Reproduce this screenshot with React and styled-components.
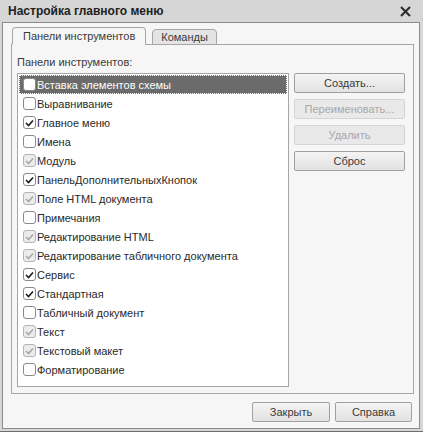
import React from 'react';
import styled, { createGlobalStyle } from 'styled-components';

const GlobalStyle = createGlobalStyle`
  body {
    margin: 0;
    background: #ffffff;
    font-family: "Liberation Sans", Arial, sans-serif;
  }
`;

const Window = styled.div`
  width: 423px;
  height: 432px;
  box-sizing: border-box;
  background: #d6d6d6;
  display: flex;
  flex-direction: column;
  border-bottom: 1px solid #6e6e6e;
`;

const TitleBar = styled.div`
  height: 22px;
  flex-shrink: 0;
  display: flex;
  align-items: center;
  justify-content: space-between;
  padding: 0 12px 0 8px;
  font-size: 12px;
  font-weight: 700;
  color: #222;
`;

const CloseIcon = styled.svg`
  width: 11px;
  height: 11px;
  margin-top: 1px;
`;

const Body = styled.div`
  flex: 1;
  margin: 0 3px 2px 2px;
  border: 1px solid #8c8c8c;
  background: #f6f6f6;
  display: flex;
  flex-direction: column;
  padding: 4px 5px 0 8px;
`;

const TabRow = styled.div`
  display: flex;
  align-items: flex-end;
  gap: 6px;
  height: 18px;
  padding-left: 1px;
  position: relative;
  z-index: 1;
  margin-bottom: -1px;
`;

const Tab = styled.div`
  height: ${(p) => (p.$active ? '18px' : '16px')};
  box-sizing: border-box;
  padding: 0 ${(p) => (p.$active ? '10px' : '8px')};
  border: 1px solid #a6a6a6;
  border-bottom: ${(p) => (p.$active ? '1px solid #f6f6f6' : '1px solid #a6a6a6')};
  border-radius: 4px 4px 0 0;
  background: ${(p) => (p.$active ? '#f6f6f6' : '#e4e4e4')};
  font-size: 11px;
  color: #3a3a3a;
  display: flex;
  align-items: center;
`;

const TabPanel = styled.div`
  height: 350px;
  box-sizing: border-box;
  border: 1px solid #a6a6a6;
  padding: 11px 7px 6px 5px;
  display: flex;
  flex-direction: column;
`;

const Caption = styled.div`
  font-size: 11px;
  color: #3a3a3a;
  height: 17px;
  line-height: 12px;
`;

const Content = styled.div`
  display: flex;
  gap: 5px;
  flex: 1;
`;

const List = styled.div`
  width: 272px;
  box-sizing: border-box;
  border: 1px solid #a6a6a6;
  background: #ffffff;
  padding: 1px 1px 0;
`;

const Row = styled.div`
  height: 19px;
  display: flex;
  align-items: center;
  box-sizing: border-box;
  padding-left: 4px;
  font-size: 11px;
  color: ${(p) => (p.$selected ? '#ffffff' : '#2a2a2a')};
  background: ${(p) => (p.$selected ? '#6b6b6b' : 'transparent')};
  outline: ${(p) => (p.$selected ? '1px dotted #ffffff' : 'none')};
  outline-offset: -1px;
  white-space: nowrap;
`;

const Box = styled.span`
  width: 13px;
  height: 13px;
  box-sizing: border-box;
  border: 1px solid ${(p) => (p.$state === 'grey' ? '#b4b4b4' : '#8a8a8a')};
  border-radius: 3px;
  background: ${(p) => (p.$state === 'grey' ? '#ececec' : '#ffffff')};
  display: flex;
  align-items: center;
  justify-content: center;
  margin-right: 1px;
  flex-shrink: 0;
`;

const Buttons = styled.div`
  display: flex;
  flex-direction: column;
  gap: 6px;
  width: 111px;
`;

const Button = styled.div`
  height: 20px;
  box-sizing: border-box;
  border: 1px solid ${(p) => (p.$disabled ? '#d4d4d4' : '#a0a0a0')};
  border-radius: 2px;
  background: ${(p) =>
    p.$disabled ? '#e9e9e9' : 'linear-gradient(#f4f4f4, #e2e2e2)'};
  color: ${(p) => (p.$disabled ? '#a8a8a8' : '#3a3a3a')};
  font-size: 11px;
  display: flex;
  align-items: center;
  justify-content: center;
  width: ${(p) => p.$width || 'auto'};
`;

const Footer = styled.div`
  display: flex;
  justify-content: flex-end;
  gap: 5px;
  padding: 8px 2px 0 0;
`;

const items = [
  { name: 'Вставка элементов схемы', state: 'off', selected: true },
  { name: 'Выравнивание', state: 'off' },
  { name: 'Главное меню', state: 'on' },
  { name: 'Имена', state: 'off' },
  { name: 'Модуль', state: 'grey' },
  { name: 'ПанельДополнительныхКнопок', state: 'on' },
  { name: 'Поле HTML документа', state: 'grey' },
  { name: 'Примечания', state: 'off' },
  { name: 'Редактирование HTML', state: 'grey' },
  { name: 'Редактирование табличного документа', state: 'grey' },
  { name: 'Сервис', state: 'on' },
  { name: 'Стандартная', state: 'on' },
  { name: 'Табличный документ', state: 'off' },
  { name: 'Текст', state: 'grey' },
  { name: 'Текстовый макет', state: 'grey' },
  { name: 'Форматирование', state: 'off' },
];

const Check = ({ state }) =>
  state === 'off' ? null : (
    <svg width="9" height="8" viewBox="0 0 9 8">
      <path
        d="M1 4 L3.5 6.5 L8 1.5"
        fill="none"
        stroke={state === 'grey' ? '#a8a8a8' : '#1a1a1a'}
        strokeWidth="1.6"
      />
    </svg>
  );

const App = () => {
  return (
    <>
      <GlobalStyle />
      <Window>
        <TitleBar>
          <span>Настройка главного меню</span>
          <CloseIcon viewBox="0 0 11 11">
            <path d="M1 1 L10 10 M10 1 L1 10" stroke="#2a2a2a" strokeWidth="2" />
          </CloseIcon>
        </TitleBar>
        <Body>
          <TabRow>
            <Tab $active>Панели инструментов</Tab>
            <Tab>Команды</Tab>
          </TabRow>
          <TabPanel>
            <Caption>Панели инструментов:</Caption>
            <Content>
              <List>
                {items.map((item) => (
                  <Row key={item.name} $selected={item.selected}>
                    <Box $state={item.state}>
                      <Check state={item.state} />
                    </Box>
                    {item.name}
                  </Row>
                ))}
              </List>
              <Buttons>
                <Button>Создать...</Button>
                <Button $disabled>Переименовать...</Button>
                <Button $disabled>Удалить</Button>
                <Button>Сброс</Button>
              </Buttons>
            </Content>
          </TabPanel>
          <Footer>
            <Button $width="78px">Закрыть</Button>
            <Button $width="77px">Справка</Button>
          </Footer>
        </Body>
      </Window>
    </>
  );
};

export default App;
